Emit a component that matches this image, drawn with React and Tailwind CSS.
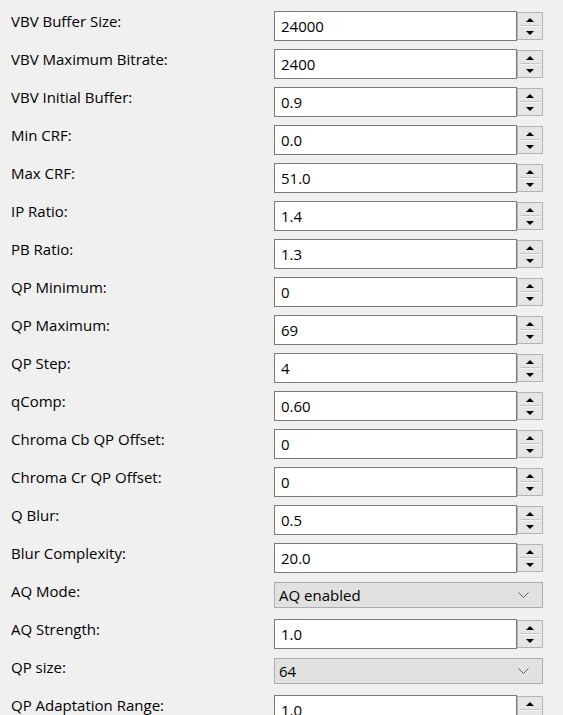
import React from "react";

const rows = [
  { label: "VBV Buffer Size:", value: "24000" },
  { label: "VBV Maximum Bitrate:", value: "2400" },
  { label: "VBV Initial Buffer:", value: "0.9" },
  { label: "Min CRF:", value: "0.0" },
  { label: "Max CRF:", value: "51.0" },
  { label: "IP Ratio:", value: "1.4" },
  { label: "PB Ratio:", value: "1.3" },
  { label: "QP Minimum:", value: "0" },
  { label: "QP Maximum:", value: "69" },
  { label: "QP Step:", value: "4" },
  { label: "qComp:", value: "0.60" },
  { label: "Chroma Cb QP Offset:", value: "0" },
  { label: "Chroma Cr QP Offset:", value: "0" },
  { label: "Q Blur:", value: "0.5" },
  { label: "Blur Complexity:", value: "20.0" },
  { label: "AQ Mode:", value: "AQ enabled", combo: true },
  { label: "AQ Strength:", value: "1.0" },
  { label: "QP size:", value: "64", combo: true },
  { label: "QP Adaptation Range:", value: "1.0" },
];

function SpinBox({ value }) {
  return (
    <div className="flex h-[30px] w-full">
      <div className="flex flex-1 items-center border border-[#7a7a7a] bg-white pl-[6px] pb-[1px]">
        {value}
      </div>
      <div className="my-[1px] flex w-[26px] flex-col border border-[#b4b4b4] bg-[#e6e6e6] p-[1px]">
        <button className="flex flex-1 items-center justify-center border-b border-[#c8c8c8]">
          <svg width="8" height="4" viewBox="0 0 8 4">
            <path d="M0 4 L4 0 L8 4 Z" fill="#000" />
          </svg>
        </button>
        <button className="flex flex-1 items-center justify-center border-t border-[#f6f6f6]">
          <svg width="8" height="4" viewBox="0 0 8 4">
            <path d="M0 0 L4 4 L8 0 Z" fill="#000" />
          </svg>
        </button>
      </div>
    </div>
  );
}

function ComboBox({ value }) {
  return (
    <div className="-mt-[3px] flex h-[26px] w-full items-center justify-between border border-[#adadad] bg-[#e1e1e1] pl-[4px] pr-[13px]">
      <span>{value}</span>
      <svg width="11" height="6" viewBox="0 0 11 6">
        <path d="M0.5 0.5 L5.5 5.5 L10.5 0.5" fill="none" stroke="#606060" strokeWidth="1" />
      </svg>
    </div>
  );
}

export default function App() {
  return (
    <div
      className="h-[715px] w-[563px] overflow-hidden bg-[#f0f0f0] pl-[11px] pr-[20px] pt-[7px] text-[15px] leading-[20px] text-black"
      style={{ fontFamily: '"Open Sans", "Noto Sans", sans-serif' }}
    >
      {rows.map((row) => (
        <div key={row.label} className="grid h-[38px] grid-cols-[263px_1fr] items-center">
          <div className="self-start pt-[4px]">{row.label}</div>
          {row.combo ? <ComboBox value={row.value} /> : <SpinBox value={row.value} />}
        </div>
      ))}
    </div>
  );
}
